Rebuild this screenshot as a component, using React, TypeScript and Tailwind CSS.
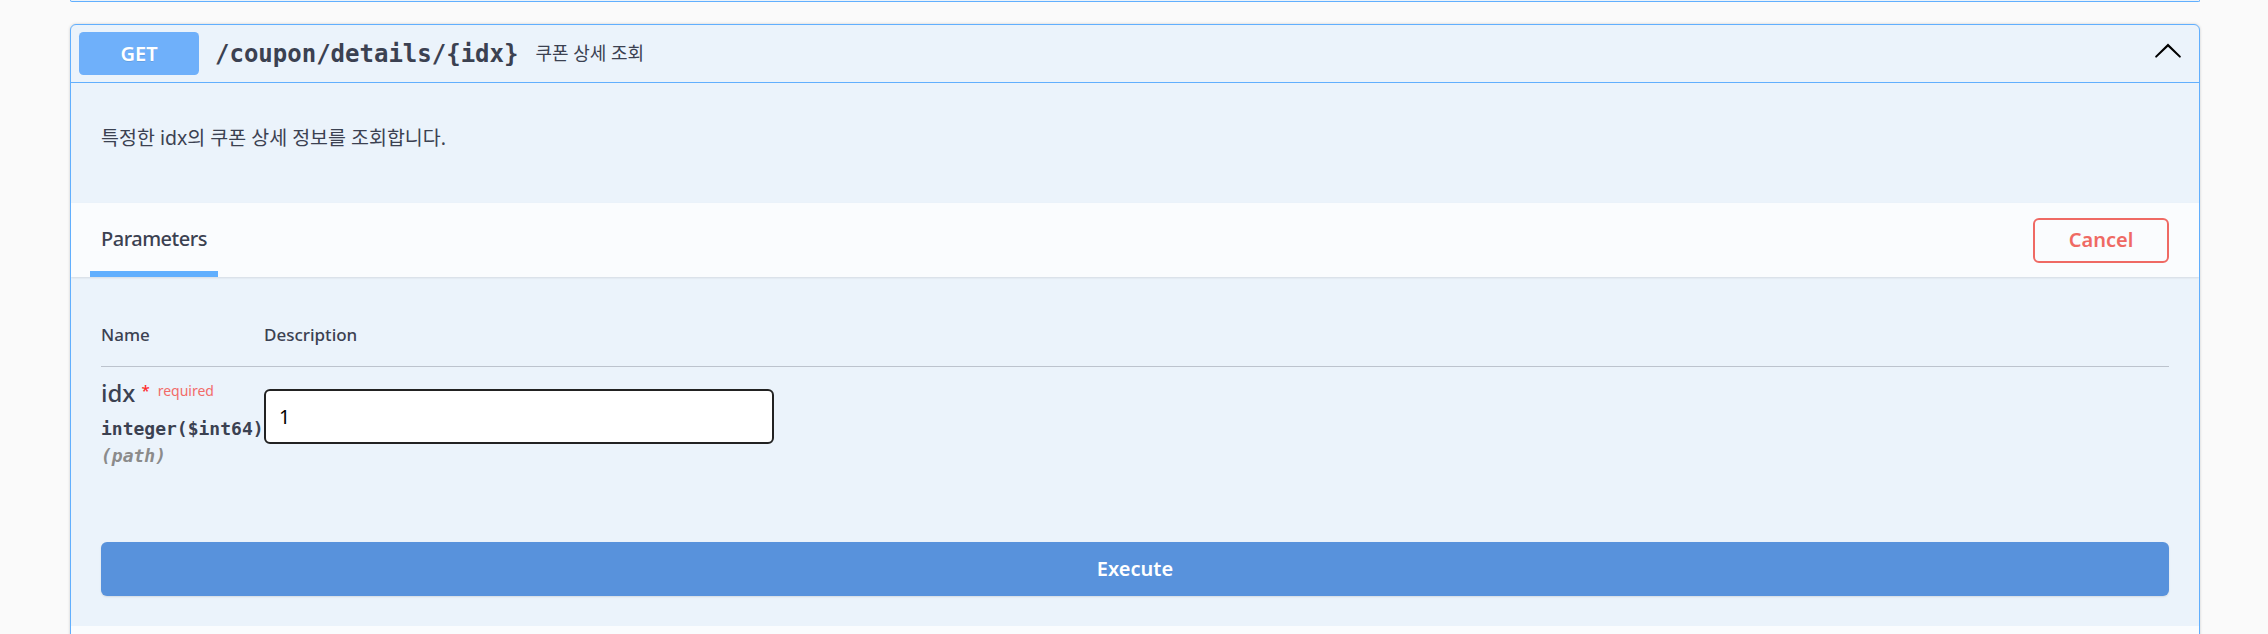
import React from "react";

const sans = "font-['Noto_Sans','Noto_Sans_CJK_KR',sans-serif]";
const mono = "font-['DejaVu_Sans_Mono',monospace]";

// collapse arrow, same shape as swagger-ui's arrow-up symbol
const ArrowUp = () => (
  <svg width="30" height="30" viewBox="0 0 20 20" className="mb-[7px] shrink-0">
    <path
      fill="#000"
      d="M 17.418 14.908 C 17.69 15.176 18.127 15.176 18.397 14.908 C 18.667 14.64 18.668 14.207 18.397 13.939 L 10.489 6.109 C 10.219 5.841 9.782 5.841 9.51 6.109 L 1.602 13.939 C 1.332 14.207 1.332 14.64 1.602 14.908 C 1.873 15.176 2.311 15.176 2.581 14.908 L 10 7.767 L 17.418 14.908 Z"
    />
  </svg>
);

export default function App() {
  return (
    <div className={`h-[634px] overflow-hidden bg-[#fafafa] text-[#3b4151] ${sans}`}>
      {/* tail of the previous operation */}
      <div className="ml-[70px] mr-[68px] h-[2px] rounded-b-[6px] border-x border-b border-[#61affe] bg-[#ebf3fb]" />

      <div className="ml-[70px] mr-[68px] mt-[22px] overflow-hidden rounded-[6px] border border-[#61affe] bg-[#ebf3fb] shadow-[0_0_3px_rgba(0,0,0,0.19)]">
        {/* summary */}
        <div className="flex items-center border-b border-[#61affe] py-[7px] pl-[8px] pr-[16px]">
          <span className="flex h-[43px] w-[120px] items-center justify-center rounded-[4.5px] bg-[#6fb0fa] text-[20px] font-semibold text-white [text-shadow:0_1px_0_rgba(0,0,0,0.1)]">
            GET
          </span>
          <span className={`ml-[16px] text-[24px] font-bold ${mono}`}>/coupon/details/{"{idx}"}</span>
          <span className="ml-[17px] text-[18px]">쿠폰 상세 조회</span>
          <div className="ml-auto" />
          <ArrowUp />
        </div>

        {/* description */}
        <div className="h-[120px] px-[30px] pt-[40px] text-[19.5px] leading-[29px]">
          특정한 idx의 쿠폰 상세 정보를 조회합니다.
        </div>

        {/* section header */}
        <div className="flex h-[74px] items-stretch justify-between bg-[#fafcfe] pl-[19px] pr-[30px] shadow-[0_1px_2px_rgba(0,0,0,0.1)]">
          <div className="flex items-center border-b-[6px] border-[#61affe] px-[11px] pt-[4px] text-[20px] font-medium tracking-[-0.5px]">
            Parameters
          </div>
          <button className="self-center h-[45px] w-[136px] rounded-[6px] border-2 border-[#ef6a64] bg-transparent text-[20px] font-semibold text-[#ef6a64]">
            Cancel
          </button>
        </div>

        {/* parameters table */}
        <div className="px-[30px] pt-[44px]">
          <div className="flex border-b border-[#bcc3cd] pb-[18px] text-[17px] font-medium leading-[27px]">
            <div className="w-[163px]">Name</div>
            <div>Description</div>
          </div>

          <div className="flex items-start pt-[10px]">
            <div className="w-[163px] shrink-0">
              <div className="flex items-start text-[24px] font-medium leading-[32px]">
                idx
                <span className="ml-[6px] mt-[6px] text-[15px] leading-[15px] text-[#ff2a2a]">*</span>
                <span className="ml-[8px] mt-[6px] text-[14px] font-normal leading-[15px] text-[#f26b69]">required</span>
              </div>
              <div className={`mt-[6px] whitespace-nowrap text-[18px] font-bold leading-[27px] ${mono}`}>integer($int64)</div>
              <div className={`text-[18px] font-bold italic leading-[27px] text-[#8b8b8b] ${mono}`}>(path)</div>
            </div>
            <input
              defaultValue="1"
              className="mt-[12px] h-[55px] w-[510px] rounded-[6px] border-2 border-[#222] bg-white px-[13px] text-[19.5px] text-black outline-none"
            />
          </div>

          <button className="mt-[73px] h-[54px] w-full rounded-[6px] bg-[#5892dc] text-[20px] font-semibold text-white shadow-[0_1px_2px_rgba(0,0,0,0.1)]">
            Execute
          </button>
          <div className="h-[30px]" />
        </div>

        {/* responses header (cut off) */}
        <div className="h-[74px] bg-[#fafcfe]" />
      </div>
    </div>
  );
}
